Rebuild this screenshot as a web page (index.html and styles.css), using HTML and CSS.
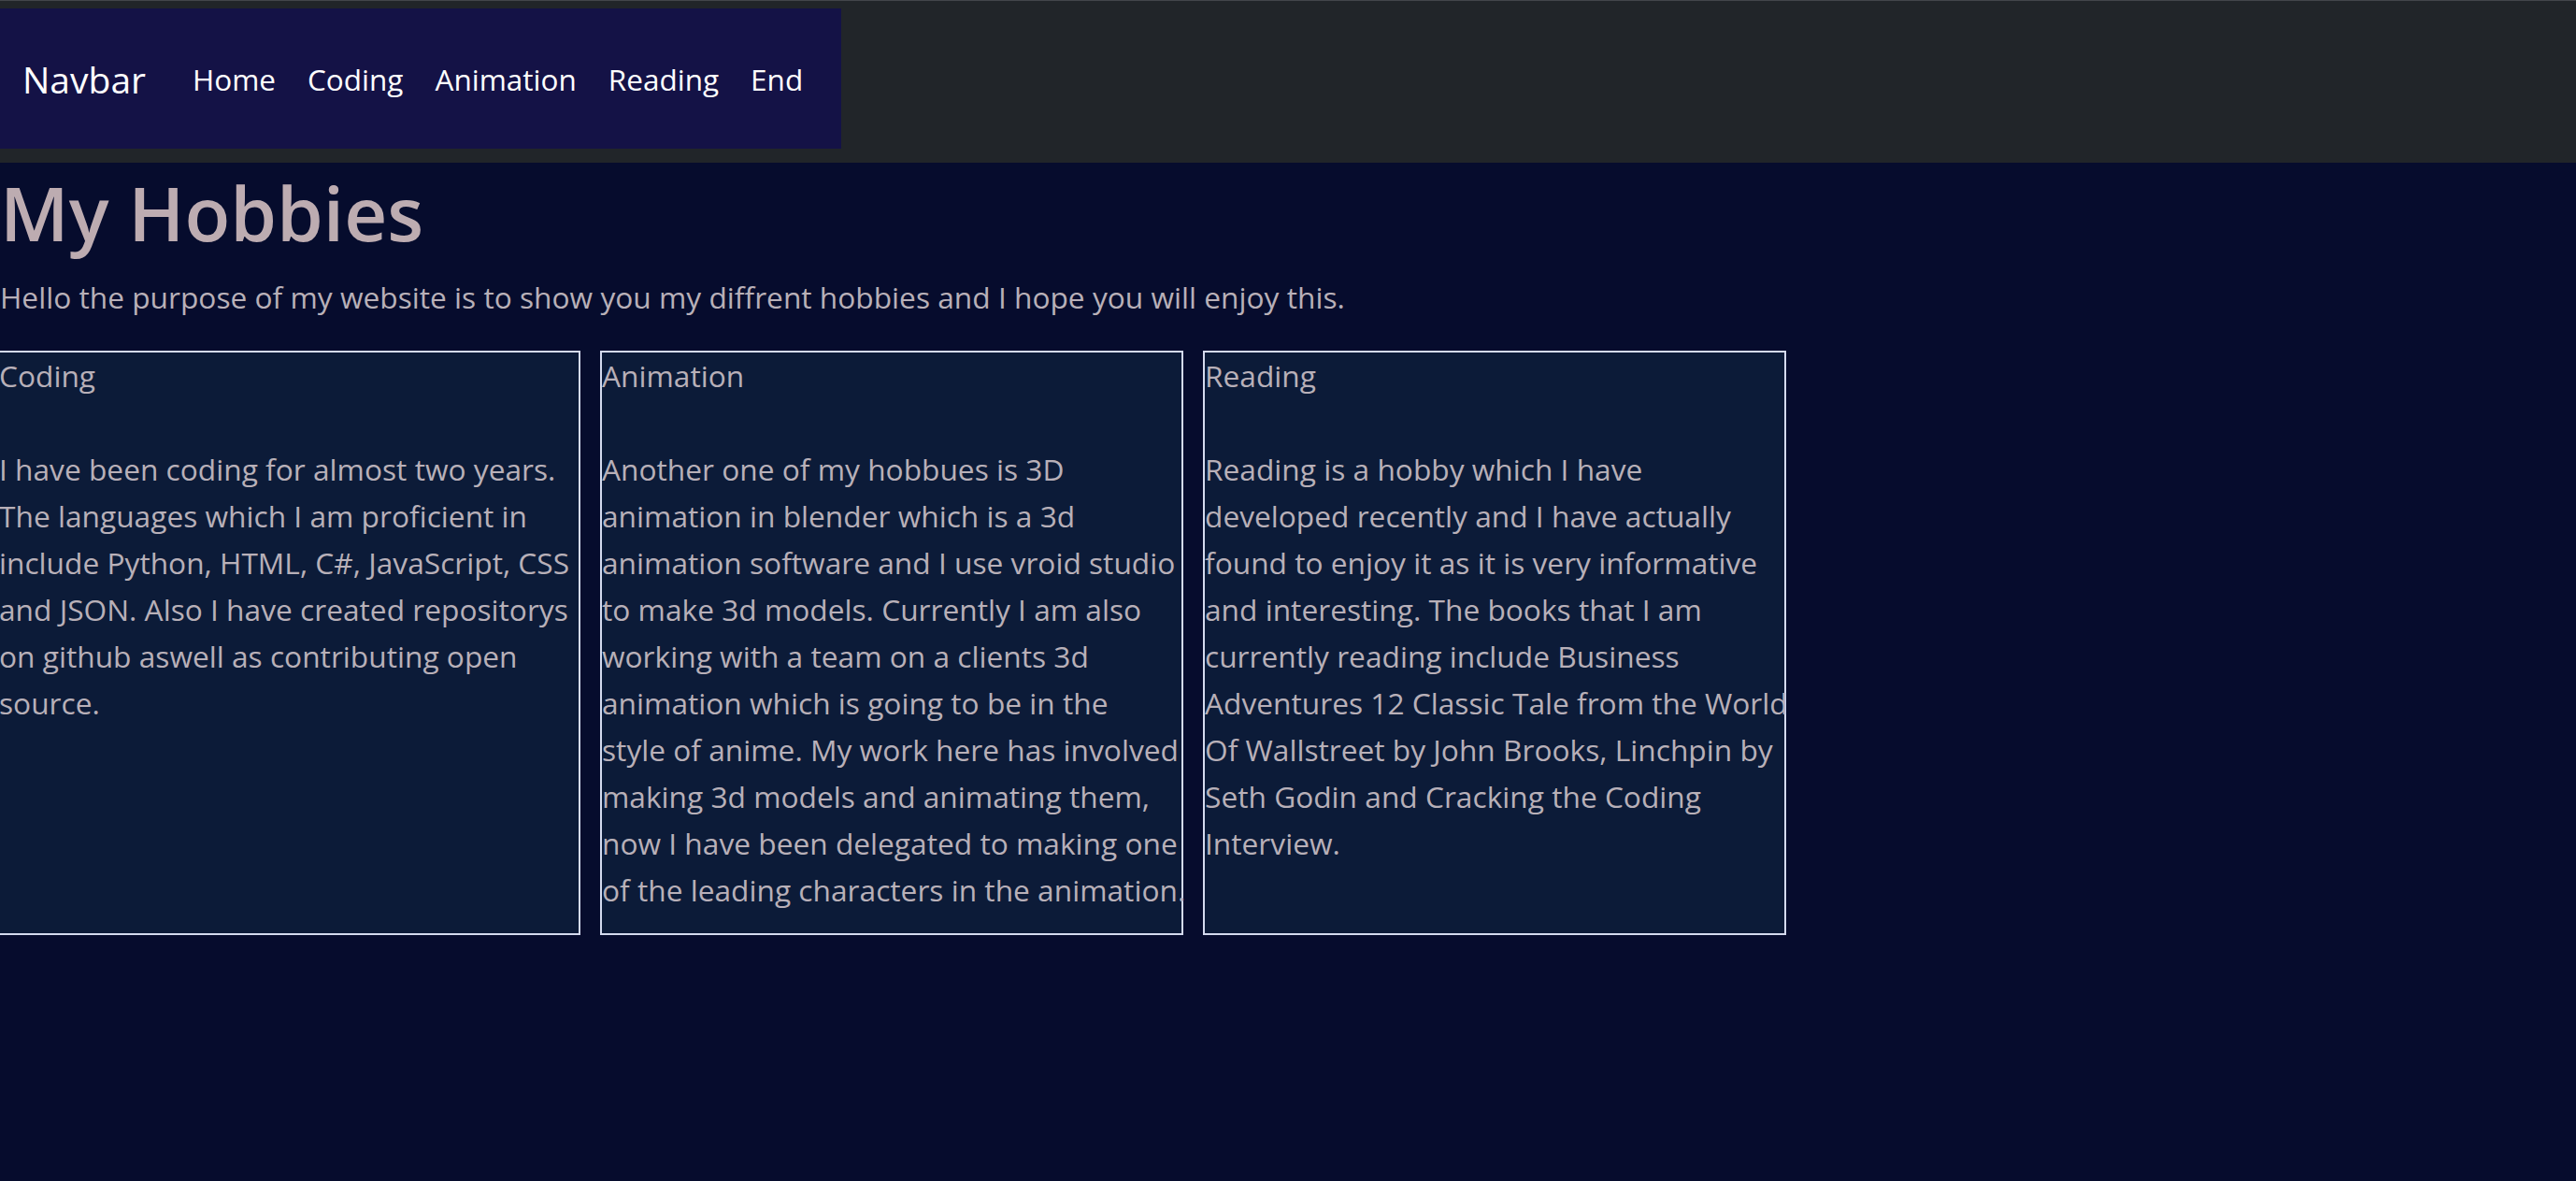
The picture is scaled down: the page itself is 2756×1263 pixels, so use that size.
FILE: index.html
```html
<!DOCTYPE html>
<html lang="en">
<head>
<meta charset="utf-8">
<title>My Hobbies</title>
<link rel="stylesheet" href="styles.css">
</head>
<body>
<header class="topbar">
  <nav class="navbox">
    <a class="brand" href="#">Navbar</a>
    <ul class="links">
      <li><a href="#">Home</a></li>
      <li><a href="#">Coding</a></li>
      <li><a href="#">Animation</a></li>
      <li><a href="#">Reading</a></li>
      <li><a href="#">End</a></li>
    </ul>
  </nav>
</header>
<main class="page">
  <h1 class="title">My Hobbies</h1>
  <p class="intro">Hello the purpose of my website is to show you my diffrent hobbies and I hope you will enjoy this.</p>
  <div class="cards">
    <section class="card">
      <h2 class="card-title">Coding</h2>
      <p class="card-text">I have been coding for almost two years.<br>The languages which I am proficient in<br>include Python, HTML, C#, JavaScript, CSS<br>and JSON. Also I have created repositorys<br>on github aswell as contributing open<br>source.</p>
    </section>
    <section class="card">
      <h2 class="card-title">Animation</h2>
      <p class="card-text">Another one of my hobbues is 3D<br>animation in blender which is a 3d<br>animation software and I use vroid studio<br>to make 3d models. Currently I am also<br>working with a team on a clients 3d<br>animation which is going to be in the<br>style of anime. My work here has involved<br>making 3d models and animating them,<br>now I have been delegated to making one<br>of the leading characters in the animation.</p>
    </section>
    <section class="card">
      <h2 class="card-title">Reading</h2>
      <p class="card-text">Reading is a hobby which I have<br>developed recently and I have actually<br>found to enjoy it as it is very informative<br>and interesting. The books that I am<br>currently reading include Business<br>Adventures 12 Classic Tale from the World<br>Of Wallstreet by John Brooks, Linchpin by<br>Seth Godin and Cracking the Coding<br>Interview.</p>
    </section>
  </div>
</main>
</body>
</html>
```

FILE: styles.css
```css
* { box-sizing: border-box; }

html, body {
  margin: 0;
  padding: 0;
}

body {
  background: #060c2d;
  font-family: "Open Sans", "Noto Sans", sans-serif;
  color: #b9b2b9;
  min-height: 1263px;
}

.topbar {
  background: #212529;
  border-top: 1px solid #43464b;
  padding: 8px 0 15px;
}

.navbox {
  display: flex;
  align-items: center;
  width: 900px;
  height: 150px;
  padding: 0 24px;
  background: #141246;
}

.brand {
  color: #ffffff;
  text-decoration: none;
  font-size: 39px;
  margin-right: 33px;
}

.links {
  display: flex;
  list-style: none;
  margin: 0;
  padding: 0;
}

.links a {
  display: block;
  color: #ffffff;
  text-decoration: none;
  font-size: 31.5px;
  padding: 0 17px;
}

.page {
  padding: 0;
}

.title {
  margin: 3px 0 17px;
  font-size: 80px;
  font-weight: 600;
  line-height: 100px;
  color: #bdacb1;
}

.intro {
  margin: 0 0 33px;
  font-size: 31.7px;
  line-height: 48px;
  color: #b8b0b8;
}

.cards {
  display: flex;
  gap: 21px;
  margin-left: -3px;
}

.card {
  width: 624px;
  height: 625px;
  border: 2px solid #d4daee;
  background: #0c1b38;
  font-size: 31.7px;
  line-height: 50px;
}

.card-title {
  margin: 0 0 50px;
  font-size: 31.7px;
  font-weight: 400;
  line-height: 50px;
  color: #b8b0b8;
}

.card-text {
  margin: 0 -12px 0 0;
  color: #b8b0b8;
}
```
